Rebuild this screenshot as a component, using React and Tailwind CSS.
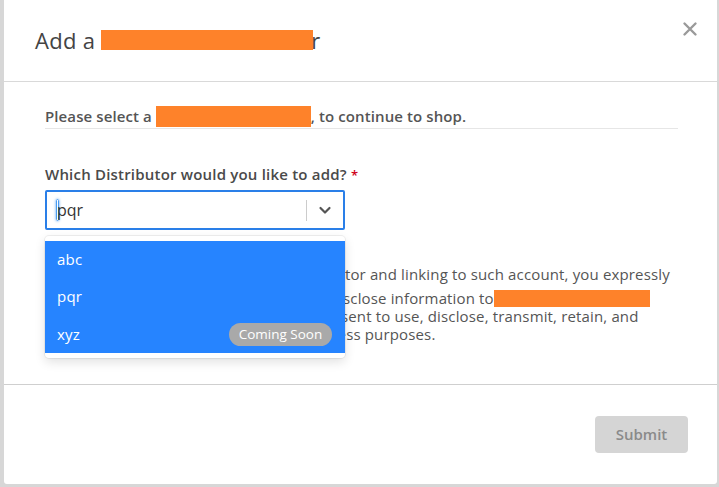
import React from "react";

const Orange = ({ className }) => (
  <span className={"inline-block bg-[#fe822a] " + className} />
);

export default function App() {
  const font = { fontFamily: '"Open Sans", "Liberation Sans", sans-serif' };
  return (
    <div className="w-[719px] h-[487px] bg-[#d7d7d7] overflow-hidden" style={font}>
      <div className="ml-[4px] w-[713px] h-[484px] bg-white rounded-b-[3px] flex flex-col relative">
        {/* header */}
        <div className="h-[82px] border-b border-[#d9d9d9] flex items-start justify-between pl-[31px] pr-[19px]">
          <h2 className="mt-[26px] text-[22px] tracking-[0.3px] leading-[28px] text-[#444] flex items-center">
            Add a&nbsp;
            <Orange className="w-[212px] h-[20px]" />
            <span className="-ml-[2px]">r</span>
          </h2>
          <button className="mt-[21px] text-[#9a9a9a]" aria-label="close">
            <svg width="16" height="16" viewBox="0 0 16 16" fill="none" stroke="currentColor" strokeWidth="2.4" strokeLinecap="round">
              <path d="M2.5 2.5 L13.5 13.5 M13.5 2.5 L2.5 13.5" />
            </svg>
          </button>
        </div>

        {/* body */}
        <div className="flex-1 pl-[41px] pr-[39px] pt-[23px] relative">
          <div className="border-b border-[#e6e6e6] pb-[1px] text-[15px] tracking-[0.1px] font-semibold text-[#555] leading-[22px] flex items-center">
            Please select a&nbsp;
            <Orange className="w-[155px] h-[21px]" />
            , to continue to shop.
          </div>

          <label className="block mt-[36px] text-[15px] tracking-[0.2px] font-semibold text-[#4a4a4a] leading-[18px]">
            Which Distributor would you like to add? <span className="text-[#d0021b] text-[13px]">*</span>
          </label>

          <div className="mt-[6px] w-[300px] h-[40px] border-2 border-[#2a7fe8] rounded-[2px] flex items-center">
            <div className="flex-1 flex items-center pl-[9px]">
              <span className="w-[3px] h-[22px] rounded-[2px] border border-[#4a9bf0] shadow-[0_0_3px_#4a9bf0] -mr-[2px]" />
              <span className="text-[16px] text-[#333]">pqr</span>
            </div>
            <span className="w-px h-[21px] bg-[#ccc]" />
            <span className="w-[36px] flex justify-center text-[#555]">
              <svg width="14" height="14" viewBox="0 0 14 14" fill="none" stroke="currentColor" strokeWidth="2.2" strokeLinecap="round" strokeLinejoin="round">
                <path d="M2.5 5 L7 9.5 L11.5 5" />
              </svg>
            </span>
          </div>

          {/* consent paragraph */}
          <div className="mt-[35px] text-[15px] tracking-[0.15px] text-[#555] leading-[18px] whitespace-nowrap">
            <div className="h-[18px]">By adding the account with a new Distributor and linking to such account, you expressly</div>
            <div className="h-[18px] mt-[6px] flex items-center">
              and hereby authorize the Distributor to disclose information to
              <Orange className="w-[156px] h-[17px]" />
            </div>
            <div className="h-[18px]">and you hereby give your full express consent to use, disclose, transmit, retain, and</div>
            <div className="h-[18px]">process the shared information for business purposes.</div>
          </div>

          {/* dropdown menu */}
          <div className="absolute left-[41px] top-[154px] w-[300px] bg-white rounded-[4px] py-[5px] shadow-[0_0_0_1px_rgba(0,0,0,0.06),0_4px_11px_rgba(0,0,0,0.12)]">
            <div className="bg-[#2684ff] text-white text-[15px] tracking-[0.2px]">
              <div className="h-[37px] flex items-center px-[12px]">abc</div>
              <div className="h-[37px] flex items-center px-[12px]">pqr</div>
              <div className="h-[38px] flex items-center justify-between pl-[12px] pr-[13px]">
                <span>xyz</span>
                <span className="h-[23px] w-[103px] rounded-full bg-[#a9a9a9] text-[13.5px] tracking-normal flex items-center justify-center">
                  Coming Soon
                </span>
              </div>
            </div>
          </div>
        </div>

        {/* footer */}
        <div className="h-[100px] border-t border-[#cfcfcf] flex items-start justify-end pr-[29px] pt-[31px]">
          <button className="w-[93px] h-[37px] rounded-[4px] bg-[#d5d5d5] text-[#8a8a8a] text-[15px] font-semibold">
            Submit
          </button>
        </div>
      </div>
    </div>
  );
}
